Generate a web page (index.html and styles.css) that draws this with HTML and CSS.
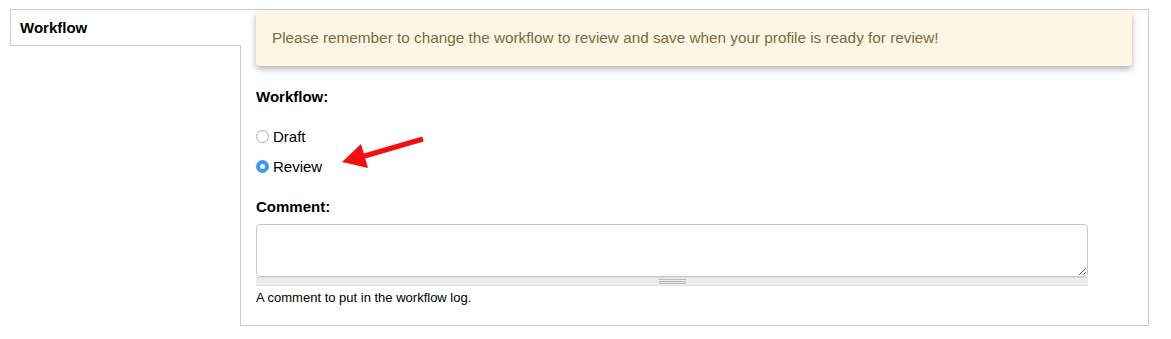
FILE: index.html
```html
<!DOCTYPE html>
<html lang="en">
<head>
    <meta charset="UTF-8">
    <title>Workflow</title>
    <link rel="stylesheet" href="styles.css">
</head>
<body>
    <div class="tabs">
        <ul class="tab-list">
            <li class="tab active">Workflow</li>
        </ul>

        <div class="tab-panel">
            <div class="message">
                Please remember to change the workflow to review and save when your profile is ready for review!
            </div>

            <div class="form-item">
                <label class="form-label">Workflow:</label>
                <div class="radios">
                    <label class="radio"><input type="radio" name="state" value="draft"> Draft</label>
                    <label class="radio"><input type="radio" name="state" value="review" checked> Review</label>
                </div>
            </div>

            <div class="form-item">
                <label class="form-label label-comment" for="comment">Comment:</label>
                <div class="textarea-wrap">
                    <textarea id="comment" rows="3"></textarea>
                    <div class="grippie"><span></span></div>
                </div>
                <div class="description">A comment to put in the workflow log.</div>
            </div>

            <!-- annotation arrow -->
            <svg class="arrow" width="100" height="40" viewBox="0 0 100 40">
                <line x1="88" y1="4" x2="26" y2="22" stroke="#f70d0d" stroke-width="5"/>
                <polygon points="7,27 26,9 33,33" fill="#f70d0d"/>
            </svg>
        </div>
    </div>
</body>
</html>
```

FILE: styles.css
```css
body {
    margin: 0;
    padding: 9px 10px;
    font-family: "Liberation Sans", Arial, Helvetica, sans-serif;
    font-size: 15px;
    color: #000;
    background: #fff;
}
.tabs {
    display: flex;
    align-items: flex-start;
}
.tab-list {
    list-style: none;
    margin: 0 -1px 0 0;
    padding: 0;
    width: 231px;
    position: relative;
    z-index: 1;
}
.tab {
    height: 35px;
    line-height: 35px;
    padding-left: 9px;
    font-weight: bold;
    border: 1px solid #ccc;
    border-right: none;
    background: #fff;
}
.tab-panel {
    position: relative;
    width: 876px;
    border: 1px solid #ccc;
    padding: 0 16px 19px 15px;
}
.message {
    margin-top: 1px;
    padding: 17px 16px 18px;
    line-height: 20px;
    font-size: 15.3px;
    background: #fcf6e2;
    color: #7d6a47;
    border-radius: 3px;
    box-shadow: 0 3px 6px rgba(0, 0, 0, 0.3);
}
.form-item {
    margin-top: 21px;
}
.form-item + .form-item {
    margin-top: 0;
}
.form-label {
    display: block;
    font-weight: bold;
    line-height: 20px;
}
.radios {
    margin-top: 14px;
}
.radio {
    display: flex;
    align-items: center;
    height: 30px;
}
.radio input {
    appearance: none;
    -webkit-appearance: none;
    width: 13px;
    height: 13px;
    margin: 0 4px 0 0;
    border: 1px solid #a9a9a9;
    border-radius: 50%;
    background: #fff;
    box-sizing: border-box;
}
.radio input:checked {
    border: 4px solid #3b99fc;
    background: #fff;
}
.label-comment {
    margin-top: 16px;
}
.textarea-wrap {
    margin-top: 7px;
    width: 832px;
}
textarea {
    display: block;
    width: 100%;
    height: 53px;
    box-sizing: border-box;
    border: 1px solid #c8c8c8;
    border-radius: 4px;
    resize: vertical;
    font-family: inherit;
    font-size: 14px;
    margin: 0;
}
.grippie {
    height: 7px;
    background: #ececec;
    border-top: 1px solid #dcdcdc;
    border-bottom: 1px solid #e4e4e4;
    display: flex;
    justify-content: center;
    align-items: center;
}
.grippie span {
    width: 27px;
    height: 5px;
    background: repeating-linear-gradient(#b8b8b8 0 1px, transparent 1px 2px);
}
.description {
    margin-top: 4px;
    font-size: 13px;
    line-height: 16px;
}
.arrow {
    position: absolute;
    left: 94px;
    top: 125px;
}
```
